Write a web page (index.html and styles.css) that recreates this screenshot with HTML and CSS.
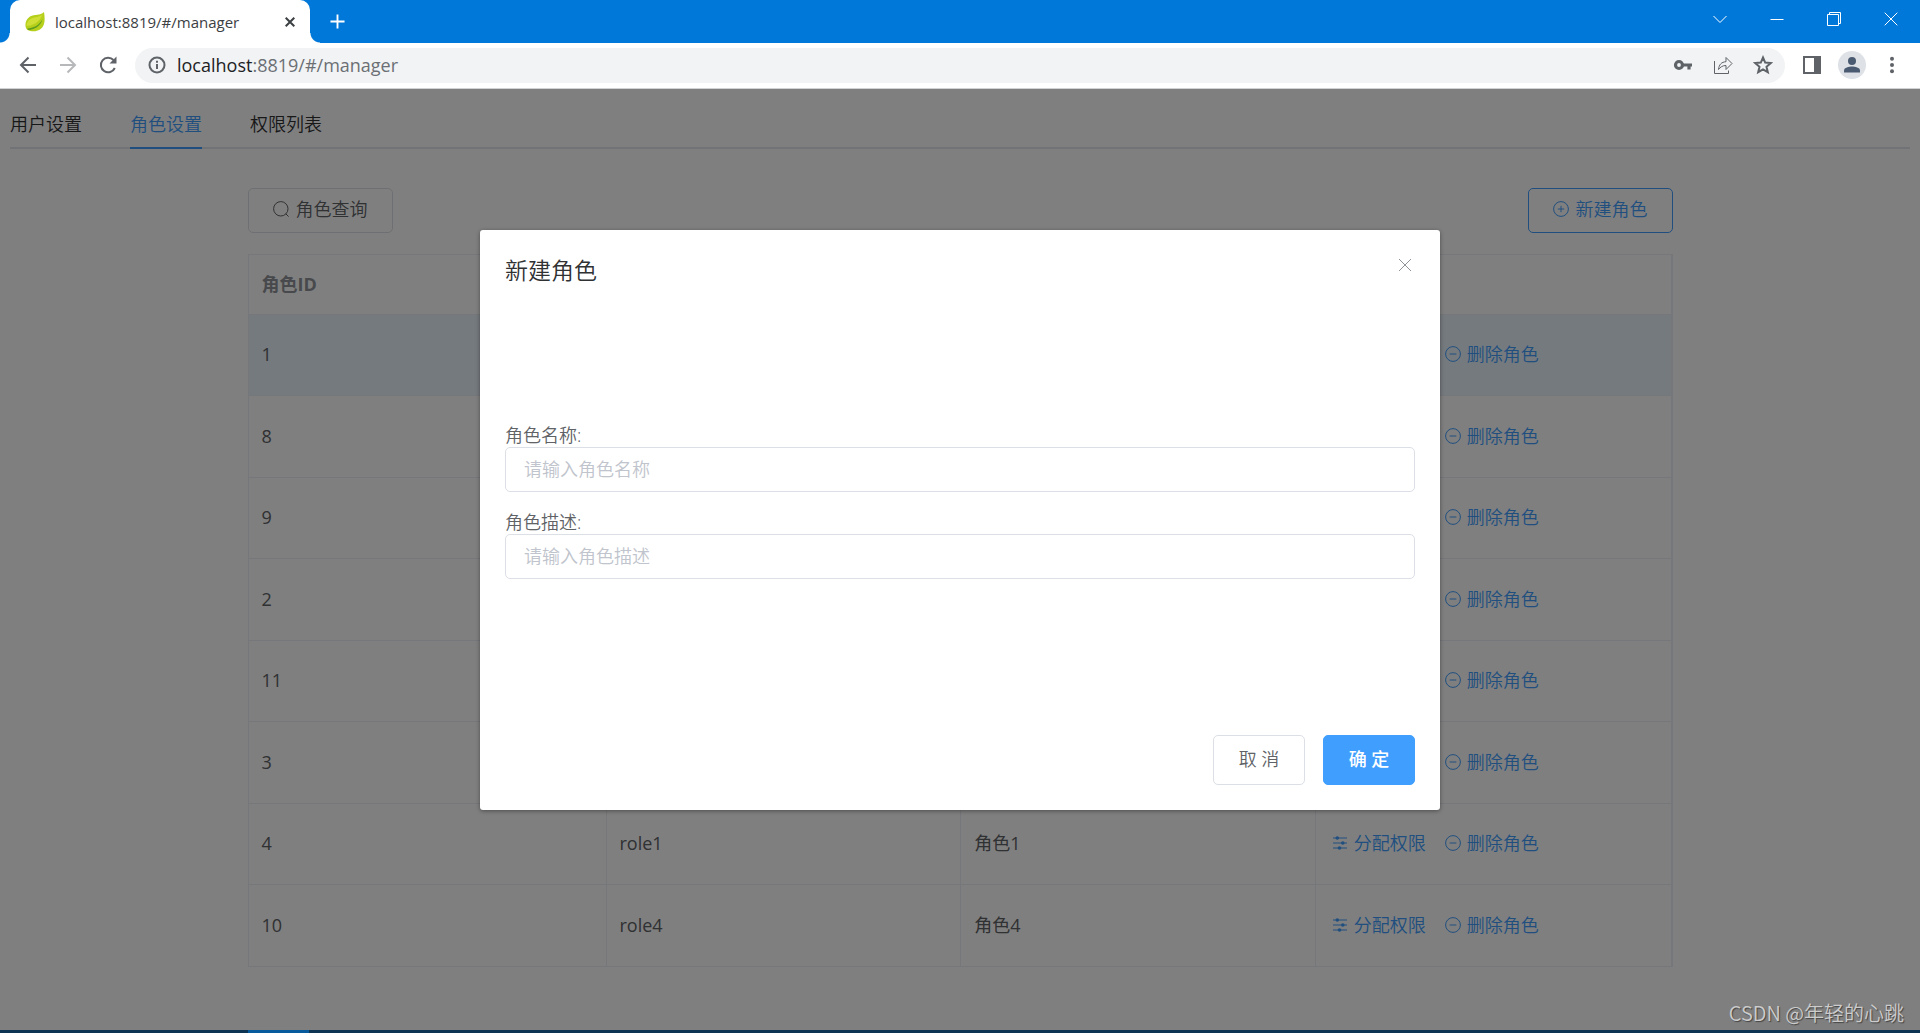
FILE: index.html
```html
<!DOCTYPE html>
<html lang="zh-CN">
<head>
<meta charset="utf-8">
<title>localhost:8819/#/manager</title>
<link rel="stylesheet" href="styles.css">
</head>
<body>
<svg class="sprite" aria-hidden="true">
  <symbol id="i-minus" viewBox="0 0 16 16"><circle cx="8" cy="8" r="7.4"/><path d="M4.6 8h6.8"/></symbol>
  <symbol id="i-plus" viewBox="0 0 16 16"><circle cx="8" cy="8" r="7.4"/><path d="M4.8 8h6.4M8 4.8v6.4"/></symbol>
  <symbol id="i-search" viewBox="0 0 16 16"><circle cx="7.8" cy="7.8" r="7.2"/><path d="M12.8 12.8l2.800 2.800"/></symbol>
  <symbol id="i-operation" viewBox="0 0 16 16"><path d="M1 3h14M1 8h14M1 13h14"/><g fill="currentColor" stroke="none"><circle cx="5.3" cy="3" r="1.8"/><circle cx="10.8" cy="8" r="1.8"/><circle cx="7.5" cy="13" r="1.8"/></g></symbol>
</svg>

<header class="browser">
  <div class="tabstrip">
    <div class="browser-tab">
      <svg class="favicon" viewBox="0 0 20 20"><path d="M19 0C20 7 20.500 14 15 17.500C11 20 6 19.500 2.500 18C-1 15 0 7.500 5 4.500C10 2 15 4 19 0Z" fill="#b5cf1b"/><path d="M17.500 2C16 5 9 5 5.500 7C3 8.500 1.500 11 1.500 14C6 14 15 11 17.500 2Z" fill="#cfdf35"/><path d="M2.500 16.500C8 16 14 14 17.500 7C16 14 9 18 3 18Z" fill="#5d9c20"/></svg>
      <span class="browser-tab-title">localhost:8819/#/manager</span>
      <button class="icon-button" aria-label="Close tab"><svg class="tab-x" viewBox="0 0 10 10"><path d="M.7.7l8.600 8.600M9.300.7L.7 9.300"/></svg></button>
    </div>
    <button class="icon-button new-tab" aria-label="New tab"><svg class="tab-plus" viewBox="0 0 16 16"><path d="M8 .5v15M.5 8h15"/></svg></button>
    <div class="window-controls">
      <button class="icon-button" aria-label="Search tabs"><svg viewBox="0 0 14 14"><path d="M.5 4l6.500 6.500L13.500 4"/></svg></button>
      <button class="icon-button" aria-label="Minimize"><svg viewBox="0 0 14 14"><path d="M.5 7.500h13"/></svg></button>
      <button class="icon-button" aria-label="Restore"><svg viewBox="0 0 14 14"><path d="M.5 2.500h11v11H.5zM2.500 2.500v-2h11v11h-2"/></svg></button>
      <button class="icon-button" aria-label="Close"><svg viewBox="0 0 14 14"><path d="M.7.7l12.600 12.600M13.300.7L.7 13.300"/></svg></button>
    </div>
  </div>
  <div class="toolbar">
    <button class="icon-button" aria-label="Back"><svg viewBox="0 0 20 20"><path d="M18 10H3M10.500 2.500L3 10l7.500 7.500"/></svg></button>
    <button class="icon-button faded" aria-label="Forward"><svg viewBox="0 0 20 20"><path d="M2 10h15M9.500 2.500L17 10l-7.500 7.500"/></svg></button>
    <button class="icon-button" aria-label="Reload"><svg viewBox="0 0 20 20"><path d="M16.800 13A7.300 7.300 0 1 1 15.500 5"/><path d="M18.500 1.500v7h-7z" fill="currentColor" stroke="none"/></svg></button>
    <div class="address">
      <svg class="info" viewBox="0 0 18 18"><circle cx="9" cy="9" r="7.500"/><path d="M9 8v5M9 4.700v2"/></svg>
      <span class="url"><b>localhost</b>:8819/#/manager</span>
      <div class="address-actions">
        <button class="icon-button" aria-label="Passwords"><svg viewBox="0 0 20 20"><circle cx="6" cy="10" r="3.500" stroke-width="3.200"/><path d="M9.500 10H19M16 10v4.500" stroke-width="3.200"/></svg></button>
        <button class="icon-button" aria-label="Share"><svg class="thin" viewBox="0 0 20 20"><path d="M1.500 6v12.500h14v-3M5.500 14.500c.5-5 3-7.500 7.500-7.800V2.500l6 6-6 6v-4c-3.500 0-5.500 1.500-7.500 4z"/></svg></button>
        <button class="icon-button" aria-label="Bookmark"><svg viewBox="0 0 20 20"><path d="M10 2.500l2.200 5.100 5.500.5-4.200 3.700 1.300 5.400L10 14.300l-4.800 2.900 1.300-5.400L2.300 8.100l5.500-.5z"/></svg></button>
      </div>
    </div>
    <div class="toolbar-actions">
      <button class="icon-button" aria-label="Side panel"><svg viewBox="0 0 20 20"><path d="M2 2h16v16H2zM13 2h5v16h-5z"/><path d="M12 1h7v18h-7z" fill="currentColor" stroke="none"/></svg></button>
      <button class="icon-button avatar" aria-label="Profile"><svg viewBox="0 0 20 20"><g fill="currentColor" stroke="none"><circle cx="10" cy="6" r="4"/><path d="M2 17.500v-2c0-3 5-4 8-4s8 1 8 4v2z"/></g></svg></button>
      <button class="icon-button" aria-label="Menu"><svg viewBox="0 0 20 20"><g fill="currentColor" stroke="none"><circle cx="10" cy="3.700" r="2"/><circle cx="10" cy="10" r="2"/><circle cx="10" cy="16.300" r="2"/></g></svg></button>
    </div>
  </div>
</header>

<main class="page">
  <nav class="tabs">
    <a class="tab" href="#users">用户设置</a>
    <a class="tab active" href="#roles">角色设置</a>
    <a class="tab" href="#permissions">权限列表</a>
  </nav>
  <section class="content">
    <div class="actions">
      <button class="button"><svg class="icon"><use href="#i-search"/></svg>角色查询</button>
      <button class="button outline"><svg class="icon"><use href="#i-plus"/></svg>新建角色</button>
    </div>
    <table class="roles">
      <colgroup><col class="col-id"><col><col><col></colgroup>
      <thead><tr><th>角色ID</th><th></th><th></th><th></th></tr></thead>
      <tbody>
        <tr class="current"><td>1</td><td></td><td></td><td><div class="links"><button class="link delete"><svg class="icon"><use href="#i-minus"/></svg>删除角色</button></div></td></tr>
        <tr><td>8</td><td></td><td></td><td><div class="links"><button class="link delete"><svg class="icon"><use href="#i-minus"/></svg>删除角色</button></div></td></tr>
        <tr><td>9</td><td></td><td></td><td><div class="links"><button class="link delete"><svg class="icon"><use href="#i-minus"/></svg>删除角色</button></div></td></tr>
        <tr><td>2</td><td></td><td></td><td><div class="links"><button class="link delete"><svg class="icon"><use href="#i-minus"/></svg>删除角色</button></div></td></tr>
        <tr><td>11</td><td></td><td></td><td><div class="links"><button class="link delete"><svg class="icon"><use href="#i-minus"/></svg>删除角色</button></div></td></tr>
        <tr><td>3</td><td></td><td></td><td><div class="links"><button class="link delete"><svg class="icon"><use href="#i-minus"/></svg>删除角色</button></div></td></tr>
        <tr><td>4</td><td>role1</td><td>角色1</td><td><div class="links"><button class="link"><svg class="icon"><use href="#i-operation"/></svg>分配权限</button><button class="link delete"><svg class="icon"><use href="#i-minus"/></svg>删除角色</button></div></td></tr>
        <tr><td>10</td><td>role4</td><td>角色4</td><td><div class="links"><button class="link"><svg class="icon"><use href="#i-operation"/></svg>分配权限</button><button class="link delete"><svg class="icon"><use href="#i-minus"/></svg>删除角色</button></div></td></tr>
      </tbody>
    </table>
  </section>

  <div class="overlay">
    <form class="dialog" role="dialog" aria-labelledby="dialog-title">
      <div class="dialog-head">
        <h2 class="dialog-title" id="dialog-title">新建角色</h2>
        <button type="button" class="icon-button dialog-close" aria-label="关闭"><svg viewBox="0 0 14 14"><path d="M1 1l12 12M13 1L1 13"/></svg></button>
      </div>
      <div class="dialog-body">
        <div class="field"><label for="role-name">角色名称:</label><input id="role-name" type="text" placeholder="请输入角色名称"></div>
        <div class="field"><label for="role-desc">角色描述:</label><input id="role-desc" type="text" placeholder="请输入角色描述"></div>
      </div>
      <div class="dialog-foot">
        <button type="button" class="button tall">取 消</button>
        <button type="button" class="button tall primary">确 定</button>
      </div>
    </form>
  </div>
  <div class="watermark">CSDN @年轻的心跳</div>
</main>
<footer class="taskbar"><div class="taskbar-active"></div></footer>
</body>
</html>
```
FILE: styles.css
```css
* { box-sizing: border-box; }
body {
  margin: 0;
  min-height: 100vh;
  display: flex;
  flex-direction: column;
  font: 350 18px/24px "Open Sans", "Noto Sans CJK SC", sans-serif;
  color: #606266;
  background: #fff;
}
button, input { font: inherit; color: inherit; margin: 0; }
button { cursor: pointer; white-space: nowrap; }
svg { display: block; fill: none; stroke: currentColor; }
.sprite { display: none; }
.icon-button {
  display: flex;
  align-items: center;
  justify-content: center;
  padding: 0;
  border: 0;
  background: none;
}

/* Browser window */
.browser { font-family: "Open Sans", sans-serif; font-weight: 400; color: #5f6368; }
.tabstrip {
  display: flex;
  align-items: flex-start;
  height: 43px;
  padding-left: 10px;
  background: #0078d9;
  color: #fff;
}
.browser-tab {
  position: relative;
  display: flex;
  align-items: center;
  width: 300px;
  height: 43px;
  padding: 0 15px;
  gap: 10px;
  border-radius: 10px 10px 0 0;
  background: #fff;
  color: #3c4043;
}
.browser-tab::before, .browser-tab::after {
  content: "";
  position: absolute;
  bottom: 0;
  width: 10px;
  height: 10px;
}
.browser-tab::before { left: -10px; background: radial-gradient(circle at 0 0, transparent 9px, #fff 10px); }
.browser-tab::after { right: -10px; background: radial-gradient(circle at 100% 0, transparent 9px, #fff 10px); }
.favicon { width: 20px; height: 20px; stroke: none; }
.browser-tab-title { flex: 1; font-size: 15px; white-space: nowrap; }
.tab-x { width: 10px; height: 10px; stroke-width: 2; }
.new-tab { width: 54px; height: 43px; }
.tab-plus { width: 15px; height: 15px; stroke-width: 2; }
.window-controls { display: flex; margin-left: auto; padding-right: 1px; }
.window-controls .icon-button { width: 57px; height: 37px; }
.window-controls svg { width: 14px; height: 14px; }
.toolbar {
  display: flex;
  align-items: center;
  height: 46px;
  padding: 0 8px 1px;
  border-bottom: 1px solid #d0d2d4;
}
.toolbar .icon-button { width: 40px; height: 40px; }
.toolbar svg { width: 20px; height: 20px; stroke-width: 2; }
.faded { opacity: .45; }
.address {
  flex: 1;
  display: flex;
  align-items: center;
  gap: 11px;
  height: 35px;
  margin-left: 7px;
  padding-left: 13px;
  border-radius: 18px;
  background: #f1f3f4;
}
.toolbar .info { width: 18px; height: 18px; stroke-width: 2; }
.toolbar .thin { stroke-width: 1; }
.url { flex: 1; font-size: 18px; color: #6b6f74; }
.url b { font-weight: 400; color: #202124; }
.address-actions { display: flex; padding-right: 2px; }
.toolbar-actions { display: flex; padding-left: 7px; }
.toolbar .avatar { width: 28px; height: 28px; margin: 6px; border-radius: 50%; background: #dee1e6; color: #4a5a70; }
.avatar svg { width: 20px; height: 20px; }

/* Role manager */
.page { position: relative; flex: 1; padding: 10px 10px 60px; }
.tabs { display: flex; gap: 48px; border-bottom: 2px solid #e4e7ed; }
.tab {
  height: 50px;
  margin-bottom: -2px;
  line-height: 50px;
  border-bottom: 2px solid transparent;
  color: #303133;
  text-decoration: none;
}
.tab.active { color: #409eff; border-color: #409eff; }
.content { width: 75%; margin: 39px auto 0; }
.actions { display: flex; justify-content: space-between; margin-bottom: 21px; }
.button {
  display: flex;
  align-items: center;
  justify-content: center;
  gap: 7px;
  height: 45px;
  padding: 0 24px 3px;
  border: 1px solid #dcdfe6;
  border-radius: 5px;
  background: #fff;
}
.outline { border-color: #409eff; color: #409eff; }
.icon { width: 16px; height: 16px; stroke-width: 1; }
.roles {
  width: 100%;
  table-layout: fixed;
  border-collapse: separate;
  border-spacing: 0;
  border: solid #ebeef5;
  border-width: 1px 2px 0 1px;
}
.col-id { width: 358px; }
.roles th, .roles td {
  padding: 0 12px 2px 13px;
  text-align: left;
  border-bottom: 1px solid #ebeef5;
}
.roles th { height: 60px; font-weight: 700; color: #909399; }
.roles td { height: 81px; border-right: 1px solid #ebeef5; font-weight: 400; }
.roles tr:nth-child(even) td { height: 82px; }
.roles td:last-child { border-right: 0; }
.roles .current td { background: #eaf5fd; }
.links { display: grid; grid-template-columns: 113px auto; justify-content: start; padding-left: 3px; font-weight: 350; }
.link {
  display: flex;
  align-items: center;
  gap: 6px;
  padding: 0;
  border: 0;
  background: none;
  color: #409eff;
}
.delete { grid-column: 2; }

/* Dialog */
.overlay { position: absolute; inset: 0; background: rgba(0, 0, 0, .5); }
.dialog {
  width: 50%;
  margin: 141px auto 0;
  padding: 25px;
  border-radius: 3px;
  background: #fff;
  box-shadow: 0 1px 4px rgba(0, 0, 0, .4);
}
.dialog-head { display: flex; justify-content: space-between; height: 32px; }
.dialog-title { margin: 0; font-size: 23px; line-height: 30px; font-weight: 350; color: #303133; }
.dialog-close { width: 20px; height: 20px; color: #909399; }
.dialog-close svg { width: 14px; height: 14px; stroke-width: 1; }
.dialog-body { display: flex; flex-direction: column; gap: 19px; padding: 137px 0 156px; }
.field { display: flex; flex-direction: column; }
.field label { line-height: 23px; }
.field input {
  height: 45px;
  padding: 0 18px 2px;
  border: 1px solid #dcdfe6;
  border-radius: 5px;
  outline: 0;
}
.field input::placeholder { color: #c0c4cc; opacity: 1; }
.dialog-foot { display: flex; justify-content: flex-end; gap: 18px; }
.tall { width: 92px; height: 50px; }
.primary { border-color: #409eff; background: #409eff; color: #fff; font-weight: 500; }
.watermark {
  position: absolute;
  right: 16px;
  bottom: 5px;
  font: 350 20px/24px "Noto Sans CJK SC", sans-serif;
  color: #ccc;
  text-shadow: 1px 1px 1px #444;
}
.taskbar { height: 3px; padding-left: 248px; background: #0d3452; }
.taskbar-active { width: 61px; height: 3px; background: #075a9c; }
```
